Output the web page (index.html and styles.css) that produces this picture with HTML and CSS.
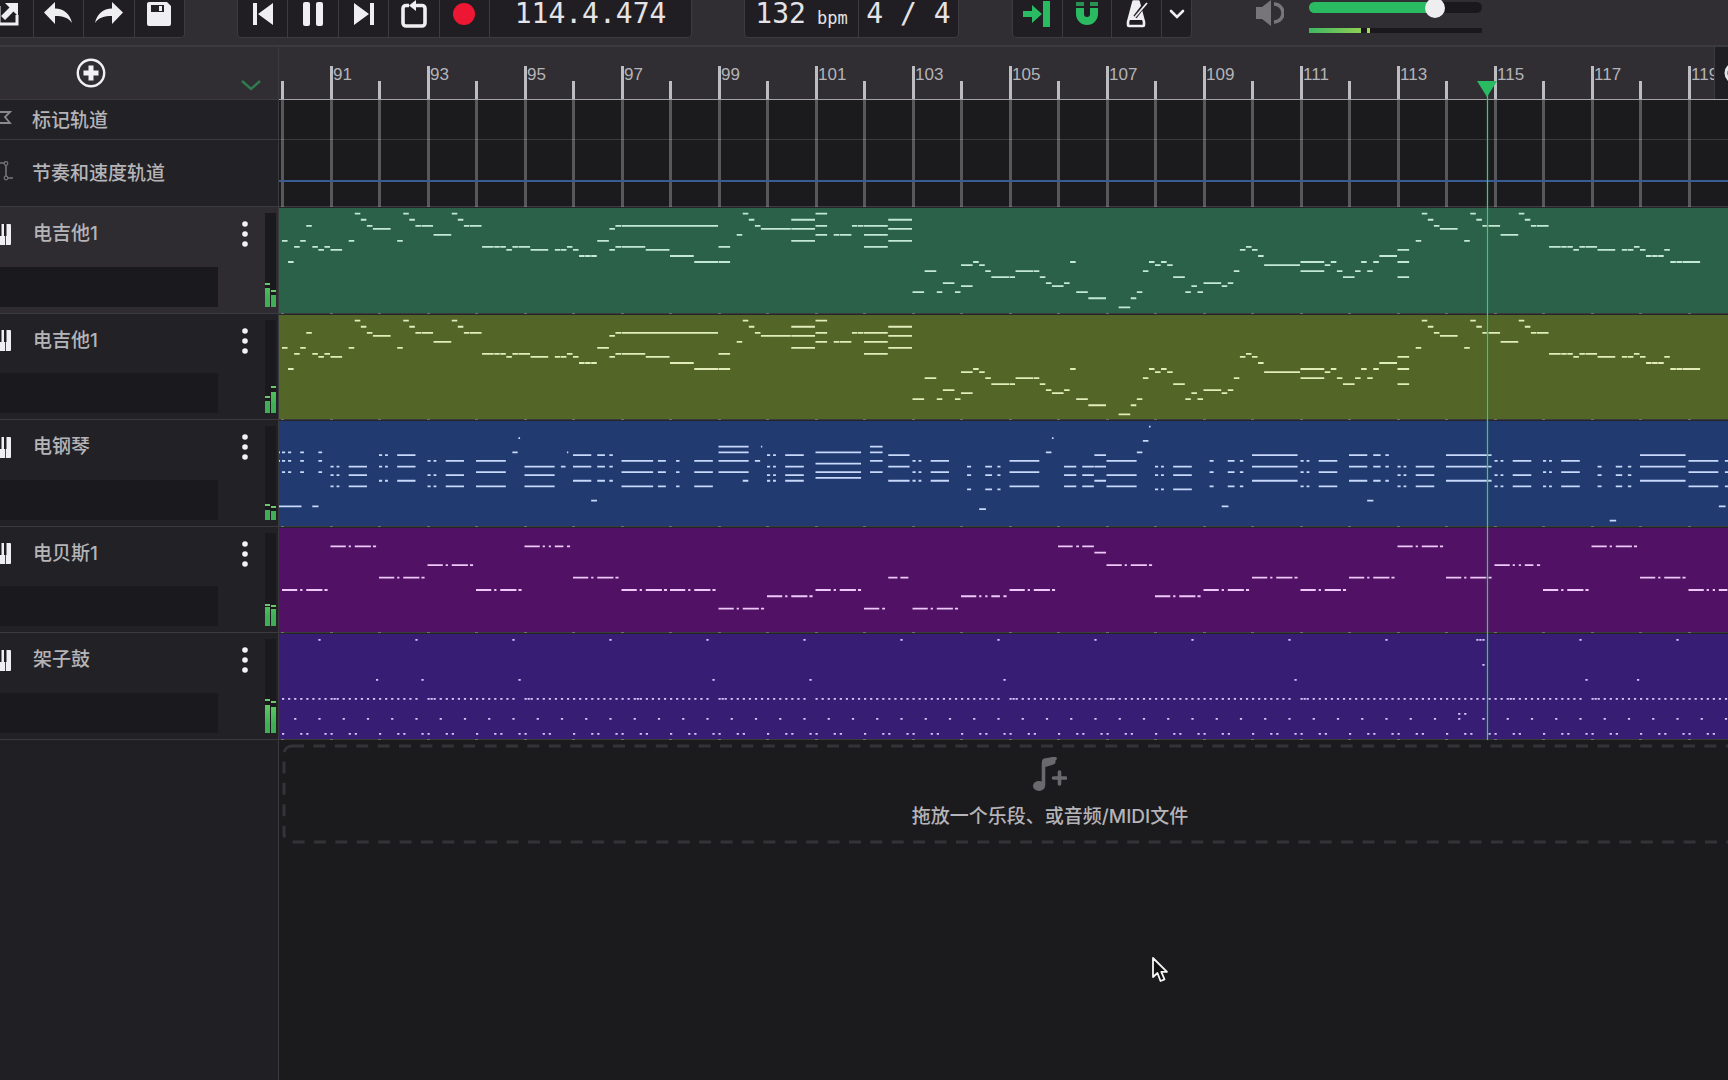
FILE: index.html
```html
<!DOCTYPE html>
<html lang="zh-CN">
<head>
<meta charset="utf-8">
<title>音轨编辑器</title>
<link rel="stylesheet" href="styles.css">
</head>
<body>
<header class="toolbar">
  <div class="group group-file">
    <button class="tool" aria-label="导出"><svg width="24" height="26" viewBox="0 0 24 26"><path d="M3 5v18h18v-9" fill="none" stroke="currentColor" stroke-width="3"/><path d="M9 2h13v13l-4.500-4.500L9 19l-4-4 8.500-8.500z" fill="currentColor"/></svg></button>
    <button class="tool" aria-label="撤销"><svg width="28" height="24" viewBox="0 0 28 24"><path d="M0 10.500 11 0v6.500c9 0 15 5.500 17 14.500-4-5.500-9-7-17-7V22z" fill="currentColor"/></svg></button>
    <button class="tool" aria-label="重做"><svg width="28" height="24" viewBox="0 0 28 24"><path d="M28 10.500 17 0v6.500C8 6.500 2 12 0 21c4-5.500 9-7 17-7V22z" fill="currentColor"/></svg></button>
    <button class="tool" aria-label="保存"><svg width="24" height="24" viewBox="0 0 24 24"><path d="M2 0h18l4 4v18a2 2 0 0 1-2 2H2a2 2 0 0 1-2-2V2a2 2 0 0 1 2-2z" fill="currentColor"/><path d="M4 3h13v7H4z" fill="#232126"/><path d="M12 4h3v5h-3z" fill="currentColor"/></svg></button>
  </div>
  <div class="group group-transport">
    <button class="tool" aria-label="回到开头"><svg width="22" height="22" viewBox="0 0 22 22"><path d="M1 0h4v22H1zM21 0v22L6 11z" fill="currentColor"/></svg></button>
    <button class="tool" aria-label="暂停"><svg width="22" height="24" viewBox="0 0 22 24"><rect x="1" width="7" height="24" rx="2" fill="currentColor"/><rect x="14" width="7" height="24" rx="2" fill="currentColor"/></svg></button>
    <button class="tool" aria-label="跳到结尾"><svg width="22" height="22" viewBox="0 0 22 22"><path d="M17 0h4v22h-4zM1 0v22l15-11z" fill="currentColor"/></svg></button>
    <button class="tool" aria-label="循环"><svg width="26" height="28" viewBox="0 0 26 28"><path d="M8 5.500H5a3 3 0 0 0-3 3V23a3 3 0 0 0 3 3h16a3 3 0 0 0 3-3V8.500a3 3 0 0 0-3-3h-6" fill="none" stroke="currentColor" stroke-width="3.600"/><path d="M8 5.500 15 0v11z" fill="currentColor"/></svg></button>
    <button class="tool" aria-label="录音"><svg width="24" height="24" viewBox="0 0 24 24"><circle cx="12" cy="12" r="11" fill="#ee1733"/></svg></button>
    <output class="readout readout-position">114.4.474</output>
  </div>
  <div class="group group-tempo">
    <output class="readout readout-tempo">132<span class="unit">bpm</span></output>
    <output class="readout readout-meter">4 / 4</output>
  </div>
  <div class="group group-modes">
    <button class="tool tool-on" aria-label="跟随播放"><svg width="28" height="26" viewBox="0 0 28 26"><path d="M0 10h9V4l10 9-10 9v-6H0zM20 0h7v26h-7z" fill="currentColor"/></svg></button>
    <button class="tool tool-on" aria-label="吸附"><svg width="24" height="26" viewBox="0 0 24 26"><path d="M1 7v6a11 11 0 0 0 22 0V7h-8v6a3 3 0 0 1-6 0V7z" fill="currentColor"/><path d="M1 1h8v4H1zM15 1h8v4h-8z" fill="currentColor" opacity=".75"/></svg></button>
    <button class="tool" aria-label="节拍器"><svg width="24" height="28" viewBox="0 0 24 28"><path d="M8.500 1.500h5L19 22v3q0 1-1 1H4q-1 0-1-1v-3z" fill="none" stroke="currentColor" stroke-width="2.600" stroke-linejoin="round"/><path d="M8 2h6l4 18H4z" fill="currentColor"/><path d="M10 17 20 4" stroke="#1f1d21" stroke-width="4"/><path d="m10 17 12-14" stroke="currentColor" stroke-width="1.800"/></svg></button>
    <button class="tool tool-narrow" aria-label="节拍器选项"><svg width="16" height="10" viewBox="0 0 16 10"><path d="m2 2 6 6 6-6" fill="none" stroke="currentColor" stroke-width="2.600" stroke-linecap="round"/></svg></button>
  </div>
  <div class="volume">
    <svg width="28" height="26" viewBox="0 0 28 26"><path d="M0 7h6l9-7v26l-9-7H0z" fill="#77757a"/><path d="M18 4a9 9 0 0 1 0 18" fill="none" stroke="#77757a" stroke-width="3.500"/></svg>
    <div class="volume-bars">
      <input class="volume-slider" type="range" min="0" max="100" value="76" aria-label="主音量">
      <div class="master-meter"><span class="master-level"></span><span class="master-peak"></span></div>
    </div>
  </div>
</header>

<main class="workspace">
  <aside class="panel">
    <div class="panel-head">
      <button class="icon-button" aria-label="添加音轨"><svg width="30" height="30" viewBox="0 0 30 30"><circle cx="15" cy="15" r="13.200" fill="none" stroke="#f1f0f3" stroke-width="2.400"/><path d="M12.500 7.500h5v5h5v5h-5v5h-5v-5h-5v-5h5z" fill="#f1f0f3"/></svg></button>
      <button class="icon-button collapse" aria-label="折叠"><svg width="20" height="11" viewBox="0 0 20 11"><path d="m1 1 9 8 9-8" fill="none" stroke="#2f7d4f" stroke-width="2.400"/></svg></button>
    </div>
    <div class="global-row marker-row">
      <svg width="12" height="14" viewBox="0 0 12 14"><path d="M-4 1h14L5 6l5 6H-4" fill="none" stroke="#8b898e" stroke-width="1.800"/></svg>
      <span>标记轨道</span>
    </div>
    <div class="global-row tempo-row">
      <svg width="14" height="20" viewBox="0 0 14 20"><path d="M0 2h4M6 4v11M8 17h5" fill="none" stroke="#77757a" stroke-width="1.600"/><circle cx="6" cy="2.500" r="1.800" fill="none" stroke="#77757a" stroke-width="1.200"/><circle cx="6" cy="17" r="1.800" fill="none" stroke="#77757a" stroke-width="1.200"/></svg>
      <span>节奏和速度轨道</span>
    </div>
    <div class="track-list">
      <div class="track track-selected">
        <div class="track-main">
          <div class="track-title"><svg class="piano"><use href="#piano"/></svg><span class="track-name">电吉他1</span><button class="icon-button more" aria-label="更多"><svg width="8" height="28"><use href="#dots"/></svg></button></div>
          <div class="track-slot"></div>
        </div>
        <div class="meter"><i style="--level:19px;--peak:22px"></i><i style="--level:12px;--peak:15px"></i></div>
      </div>
      <div class="track">
        <div class="track-main">
          <div class="track-title"><svg class="piano"><use href="#piano"/></svg><span class="track-name">电吉他1</span><button class="icon-button more" aria-label="更多"><svg width="8" height="28"><use href="#dots"/></svg></button></div>
          <div class="track-slot"></div>
        </div>
        <div class="meter"><i style="--level:12px;--peak:15px"></i><i style="--level:21px;--peak:25px"></i></div>
      </div>
      <div class="track">
        <div class="track-main">
          <div class="track-title"><svg class="piano"><use href="#piano"/></svg><span class="track-name">电钢琴</span><button class="icon-button more" aria-label="更多"><svg width="8" height="28"><use href="#dots"/></svg></button></div>
          <div class="track-slot"></div>
        </div>
        <div class="meter"><i style="--level:10px;--peak:14px"></i><i style="--level:9px;--peak:12px"></i></div>
      </div>
      <div class="track">
        <div class="track-main">
          <div class="track-title"><svg class="piano"><use href="#piano"/></svg><span class="track-name">电贝斯1</span><button class="icon-button more" aria-label="更多"><svg width="8" height="28"><use href="#dots"/></svg></button></div>
          <div class="track-slot"></div>
        </div>
        <div class="meter"><i style="--level:19px;--peak:20px"></i><i style="--level:17px;--peak:19px"></i></div>
      </div>
      <div class="track">
        <div class="track-main">
          <div class="track-title"><svg class="piano"><use href="#piano"/></svg><span class="track-name">架子鼓</span><button class="icon-button more" aria-label="更多"><svg width="8" height="28"><use href="#dots"/></svg></button></div>
          <div class="track-slot"></div>
        </div>
        <div class="meter"><i style="--level:28px;--peak:32px"></i><i style="--level:26px;--peak:30px"></i></div>
      </div>
    </div>
  </aside>

  <section class="timeline">
    <div class="ruler">
      <ol class="bars">
        <li>91</li><li>93</li><li>95</li><li>97</li><li>99</li><li>101</li><li>103</li><li>105</li><li>107</li><li>109</li><li>111</li><li>113</li><li>115</li><li>117</li><li>119</li>
      </ol>
      <button class="side-tab" aria-label="侧栏"><svg width="13" height="30" viewBox="0 0 13 30"><circle cx="20" cy="14" r="9" fill="none" stroke="#e6e5e8" stroke-width="3"/></svg></button>
    </div>
    <div class="lane marker-row"></div>
    <div class="lane tempo-row"><div class="tempo-line"></div></div>
    <div class="track-list">
      <div class="lane"><svg class="clip clip-green" data-notes="guitar"></svg></div>
      <div class="lane"><svg class="clip clip-olive" data-notes="guitar"></svg></div>
      <div class="lane"><svg class="clip clip-blue" data-notes="piano"></svg></div>
      <div class="lane"><svg class="clip clip-purple" data-notes="bass"></svg></div>
      <div class="lane"><svg class="clip clip-indigo" data-notes="drums"></svg></div>
    </div>
    <div class="dropzone">
      <svg class="dropzone-frame"><rect x="2" y="2" rx="8"/></svg>
      <svg width="34" height="34" viewBox="0 0 34 34"><path d="M10.500 28V6q0-1.500 1.500-2l10-2.500" fill="none" stroke="#6a696d" stroke-width="3.600" stroke-linecap="round"/><path d="M9 4q0-2 2-2.500L20 0q2.500 0 2.500 2v3q0 2-2 2.500L12.500 10z" fill="#6a696d"/><ellipse cx="6" cy="29" rx="6" ry="5" fill="#6a696d"/><path d="M26.500 15v12M20.500 21h12" stroke="#6a696d" stroke-width="3.600" stroke-linecap="round"/></svg>
      <p>拖放一个乐段、或音频/MIDI文件</p>
    </div>
    <div class="playhead"></div>
  </section>
</main>

<svg class="pointer" width="18" height="28" viewBox="0 0 18 28"><path d="M2 2v19l4.500-4 3 8 4-1.700-3.200-7.500H16z" fill="#111" stroke="#f5f5f5" stroke-width="1.800" stroke-linejoin="round"/></svg>

<svg class="symbols" aria-hidden="true">
  <symbol id="piano" viewBox="0 0 11 21"><path d="M0 0h10q1 0 1 1v19q0 1-1 1H0z" fill="#efeef1"/><path d="M0 0h1.500v12H0zM4 0h2.500v12H4zM5 12h.800v9H5z" fill="#1f1d21"/></symbol>
  <symbol id="dots" viewBox="0 0 8 28"><g fill="#f3f2f5"><circle cx="4" cy="4" r="2.800"/><circle cx="4" cy="14" r="2.800"/><circle cx="4" cy="24" r="2.800"/></g></symbol>
</svg>
<script src="app.js"></script>
</body>
</html>
```
FILE: styles.css
```css
:root {
  --line: #3b3a3e;
  --dark: #1b1a1d;
  --panel: #222125;
  --raised: #302e33;
  --green: #2abb62;
  --bar-pair: 97px;
}

* { box-sizing: border-box; }

body {
  margin: 0;
  min-height: 100vh;
  display: flex;
  flex-direction: column;
  overflow: hidden;
  background: var(--dark);
  color: #b5b4b8;
  font: 500 19px/24px Inter, "Noto Sans CJK SC", sans-serif;
}

svg { display: block; }

button {
  padding: 0;
  border: 0;
  background: none;
  color: #efeef1;
}

/* Toolbar */
.toolbar {
  display: flex;
  align-items: flex-end;
  height: 47px;
  padding-bottom: 7px;
  background: var(--raised);
  border-bottom: 2px solid var(--line);
}

.group {
  display: flex;
  flex: none;
  height: 48px;
  overflow: hidden;
  background: #201e22;
  border: 1px solid #3d3b40;
  border-radius: 4px;
}

.group-file { width: 203px; margin-left: -18px; }
.group-transport { width: 455px; margin-left: 52px; }
.group-tempo { width: 215px; margin-left: 52px; }
.group-modes { width: 180px; margin-left: 53px; }

.tool {
  display: grid;
  flex: 1;
  place-items: center;
}

.tool + .tool, .tool + .readout, .readout + .readout { border-left: 1px solid #3d3b40; }
.tool-on { color: var(--green); }
.tool-narrow { flex: none; width: 30px; }

.readout {
  display: flex;
  justify-content: center;
  align-items: center;
  gap: 11px;
  color: #e4e3e7;
  font: 28px/26px "DejaVu Sans Mono", monospace;
}

.readout-position { width: 202px; }
.readout-tempo { width: 113px; }
.readout-meter { flex: 1; }
.unit { font-size: 17px; line-height: 18px; padding-top: 8px; }

.volume {
  display: flex;
  align-items: flex-end;
  gap: 25px;
  padding-bottom: 5px;
  margin-left: 64px;
}

.volume > svg { margin-bottom: 7px; }

.volume-bars {
  display: flex;
  flex-direction: column;
  gap: 15px;
  width: 173px;
}

.volume-slider {
  appearance: none;
  width: 100%;
  height: 11px;
  margin: 0;
  border-radius: 6px;
  background: linear-gradient(90deg, var(--green) 73%, #1a181c 73%);
}

.volume-slider::-webkit-slider-thumb {
  appearance: none;
  width: 20px;
  height: 20px;
  border-radius: 50%;
  background: #eeedef;
}

.master-meter {
  display: flex;
  gap: 6px;
  height: 5px;
  background: #1a181c;
}

.master-level { width: 30%; background: linear-gradient(90deg, #3fb763, #8fcf54); }
.master-peak { width: 3px; background: #a4dd50; }

/* Workspace */
.workspace { display: flex; flex: 1; }

.panel {
  flex: none;
  width: 279px;
  background: #201f23;
  border-right: 1px solid var(--line);
}

.panel-head {
  display: flex;
  justify-content: space-between;
  align-items: center;
  height: 53px;
  padding: 0 17px 0 76px;
  background: var(--raised);
  border-bottom: 1px solid var(--line);
}

.icon-button { display: grid; place-items: center; }
.collapse { padding-top: 24px; }

.marker-row { height: 40px; }
.tempo-row { height: 67px; }

.global-row {
  display: grid;
  grid-template-columns: 32px 1fr;
  align-items: center;
  padding-top: 2px;
  background: var(--panel);
  border-bottom: 1px solid var(--line);
}

.global-row svg { margin-top: -6px; }

.track-list {
  display: grid;
  grid-template-rows: repeat(5, 1fr);
  height: 533px;
}

.track {
  display: flex;
  justify-content: space-between;
  min-height: 0;
  padding: 6px 2px 6px 0;
  background: var(--panel);
  border-bottom: 1px solid var(--line);
}

.track-selected { background: #2e2c31; }

.track-main {
  display: flex;
  flex: 1;
  flex-direction: column;
  justify-content: space-between;
}

.track-title {
  display: flex;
  align-items: center;
  height: 42px;
  padding-right: 16px;
}

.piano { width: 11px; height: 21px; margin-right: 22px; }
.track-name { flex: 1; }

.track-slot {
  width: 218px;
  height: 40px;
  background: #1a191d;
}

.meter {
  display: flex;
  gap: 1px;
  width: 11px;
  background: #1a191d;
}

.meter i {
  position: relative;
  align-self: flex-end;
  width: 5px;
  height: var(--level);
  background: linear-gradient(0deg, #3fae57 0 9px, #66cf63 32px);
}

.meter i::after {
  content: "";
  position: absolute;
  bottom: var(--peak);
  width: 5px;
  height: 2px;
  background: #6fc66c;
}

/* Timeline */
.timeline {
  position: relative;
  flex: 1;
  min-width: 0;
  overflow: hidden;
}

.ruler {
  display: flex;
  position: relative;
  height: 53px;
  padding: 19px 0 0 51px;
  overflow: hidden;
  background: linear-gradient(90deg, #bdbcc1 3px, transparent 3px) 2px 100% / var(--bar-pair) 18px repeat-x, var(--raised);
  border-bottom: 1px solid #a3a2a7;
}

.bars {
  display: flex;
  margin: 0;
  padding: 0;
  list-style: none;
}

.bars li {
  flex: none;
  width: var(--bar-pair);
  border-left: 3px solid #bdbcc1;
  font: 17px/18px "Liberation Sans", sans-serif;
}

.side-tab {
  position: absolute;
  top: 0;
  right: 0;
  width: 14px;
  height: 53px;
  background: #1f1e22;
  border-left: 1px solid var(--line);
}

.lane {
  min-height: 0;
  background:
    linear-gradient(90deg, #58575a 3px, transparent 3px) 51px 0 / var(--bar-pair) 100%,
    linear-gradient(90deg, #58575a 3px, transparent 3px) 2px 0 / var(--bar-pair) 100%,
    var(--dark);
  border-bottom: 1px solid rgba(255, 255, 255, 0.14);
}

.tempo-line {
  height: 42px;
  border-bottom: 2px solid #3a5c94;
}

.clip {
  width: 100%;
  height: 100%;
  border-top: 1px solid #252428;
}

.clip-green { background: #2a6148; fill: #c3e9d4; }
.clip-olive { background: #536527; fill: #e3edba; }
.clip-blue { background: #213a70; fill: #c8d9fb; }
.clip-purple { background: #511265; fill: #efc8fa; }
.clip-indigo { background: #371d73; fill: #d8c6fd; }

.playhead {
  position: absolute;
  top: 34px;
  left: 1208px;
  width: 1px;
  height: 659px;
  background: #3fc77a;
  box-shadow: 0 0 2px #2a8f56;
}

.playhead::before {
  content: "";
  position: absolute;
  left: -10px;
  border: solid transparent;
  border-width: 16px 10px 0;
  border-top-color: var(--green);
}

.dropzone {
  position: relative;
  display: flex;
  flex-direction: column;
  align-items: center;
  gap: 14px;
  height: 100px;
  margin: 4px -90px 0 3px;
  padding-top: 13px;
}

.dropzone p { margin: 0; }

.dropzone-frame {
  position: absolute;
  inset: 0;
  width: 100%;
  height: 100%;
}

.dropzone-frame rect {
  width: calc(100% - 4px);
  height: calc(100% - 4px);
  fill: none;
  stroke: #343337;
  stroke-width: 3px;
  stroke-dasharray: 12 9.4;
}

.pointer { position: absolute; left: 1151px; top: 956px; }
.symbols { position: absolute; width: 0; height: 0; }
```
FILE: app.js
```js
// Positions and lengths are in sixteenth notes counted from bar 90.
const STEP = 97 / 32;
const ORIGIN = 3;

const guitar = [
  [0,2,9],[2,2,16],[4,2,11],[6,2,9],[8,2,4],[10,2,11],[12,2,12],[14,2,11],[16,4,12],[22,2,9],[24,2,0],[26,2,2],[28,2,4],[30,6,5],
  [38,2,9],[40,2,0],[42,2,2],[44,2,4],[46,4,4],[50,6,7],[56,2,0],[58,2,2],[60,2,4],[62,4,4],[66,4,11],[70,2,11],[72,2,11],[74,2,12],
  [76,2,11],[78,4,11],[82,6,12],[90,2,12],[92,2,12],[94,2,11],[96,2,12],[98,2,14],[100,2,14],[102,2,14],[104,4,9],[108,2,5,12],
  [110,2,4,11],[112,32,4],[112,8,11],[120,8,12],[128,8,14],[136,8,16],[144,4,11,16],[150,2,7],[152,2,0],[154,2,2],[156,2,4],[158,10,5],
  [168,8,2,5,9],[176,4,0,4,7],[182,2,7],[184,4,7],[188,2,4],[190,2,4],[192,8,4,7,11],[200,8,2,5,9],
  [208,4,26],[212,4,19],[216,2,26],[218,4,23],[222,2,26],[224,4,17,24],[228,2,16],[230,2,17],[232,2,19],[234,6,21],[240,2,21],
  [242,6,19],[248,2,19],[250,2,21],[252,2,23],[254,4,24],[258,2,23],[260,2,16],[262,4,26],[266,6,28],[276,4,31],[280,2,28],[282,2,26],
  [284,2,19],[286,2,16],[288,2,17],[290,2,16],[292,2,17],[294,4,21],[298,2,26],[300,2,24],[302,2,26],[304,6,23],[310,2,24],[312,2,23],
  [314,2,19],[316,2,12],[318,2,11],[320,2,12],[322,2,14],[324,12,17],[336,8,16,19],[344,2,17],[346,2,16],[348,2,19],[350,4,21],
  [354,2,19],[356,2,16],[358,2,19],[360,2,16],[362,6,14],[368,4,12,16,21],[374,2,9],[376,2,0],[378,2,2],[380,2,4],[382,6,5],
  [390,2,9],[392,2,0],[394,2,2],[396,2,4],[398,4,4],[402,6,7],[408,2,0],[410,2,2],[412,2,4],[414,4,4],[418,4,11],[422,2,11],
  [424,2,11],[426,2,12],[428,2,11],[430,4,11],[434,6,12],[442,2,12],[444,2,12],[446,2,11],[448,2,12],[450,2,14],[452,2,14],
  [454,2,14],[456,2,12],[458,2,16],[460,2,16],[462,6,16]
];

const piano = [
  [-1,0.5,9,12],[0,1.2,9,12,16],[2,1.2,9,12,16],[6,1.4,9,12,16],[12,1.4,9,12,16],[-1,7.6,28],[10,2.2,28],
  [16,1.2,14,17,21],[18,1.1,14,17,21],[22,6.2,14,17,21],[32,1.2,10,14,19],[34,1.1,10,14,19],[38,6.2,10,14,19],
  [48,1.2,12,17,21],[50,1.1,12,17,21],[54,6.2,12,17,21],[64,10,12,16,21],[76,1.9,9],[78,0.7,4],[80,10.1,14,17,21],
  [92,1.7,14],[94,0.6,9],[96,6.2,10,14,19],[104,2.7,10,14,19],[108,1.3,10,14,19],[102,2.1,26],
  [112,10.6,12,16,21],[124,2.8,12,16,21],[130,1.3,12,16,21],[136,6.3,12,16,21],[144,10.1,7,9,12,16],[152,2,19],[156,1.9,12],[158,0.6,7],
  [160,1.2,10,14,17,19],[162,1.1,10,14,17,19],[166,6.3,10,14,17,19],[176,15.2,9,13,16,18],[194,4.3,7,9,12,16],[200,7.2,10,14,19],
  [208,1.2,12,16,19],[210,1.1,12,16,19],[214,6.2,12,16,19],[226,1.5,14,17,22],[232,2.4,14,17,22],[236,1.2,14,17,22],[230,2.4,29],
  [240,10,12,16,21],[252,2,9],[254,0.7,4],[258,4.2,14,17,21],[264,4,14,17,21],[268,4,10,14,19],[272,10.1,12,17,21],
  [282,2,9],[284,2,5],[286,0.7,0],[288,1.2,14,17,22],[290,1.1,14,17,22],[294,6.3,14,17,22],
  [306,1.5,12,16,21],[312,2.4,12,16,21],[316,1.3,12,16,21],[310,2.4,28],[320,15.2,10,14,19],
  [336,1.2,12,16,21],[338,1.1,12,16,21],[342,6.3,12,16,21],[352,6.2,10,14,19],[360,2.6,10,14,19],[364,1.3,10,14,19],[358,2.2,26],
  [368,1.2,14,17,21],[370,1.1,14,17,21],[374,6.3,14,17,21],[384,15.2,10,14,19],[400,1.2,12,17,21],[402,1.1,12,17,21],[406,6.3,12,17,21],
  [416,1.2,12,16,21],[418,1.1,12,16,21],[422,6.3,12,16,21],[434,1.5,14,17,21],[440,2.3,14,17,21],[444,1.3,14,17,21],[438,2.3,33],
  [448,15.2,10,14,19],[464,10,12,16,21],[476,3,12,16,21],[474,2.4,28]
];

const steady = [[0,5.2],[6,0.9],[8,5.5],[14,1.2]];
const broken = [[0,5.2],[6,0.9],[8,0.9],[10,3],[14,1.2]];
const bassBars = [7,0,5,3,7,[0],5,7,7,10,8,7,null,10,[8],7,null,3,8,7,5,7,5,0,5,[3],7,0,5,[7]];
const bass = [[192,5.2,10],[198,1.1,10],[200,3.2,5],[204,2.8,5],[256,5,0],[262,1.1,0],[264,4,0],[268,4,1]];
bassBars.forEach((row, bar) => {
  if (row === null) return;
  const pattern = Array.isArray(row) ? broken : steady;
  pattern.forEach(([start, length]) => bass.push([bar * 16 + start, length, Number(row)]));
});

// Drum rows are pixel heights inside the clip.
const drums = [];
const hit = (row, steps) => steps.forEach(step => drums.push([step, 0.9, row]));
hit(6, [12,44,76,108,140,172,204,236,268,300,332,364,394,395,396,428,460]);
hit(31, [396]);
hit(46, [31,46,78,142,174,238,334,430,447]);
hit(80, [388,390]);
hit(65, [17,49,81,117,145,241,273,337,405,433]);
const rests = [46,78,142,174,238,334,430];
for (let step = 0; step < 520; step += 2) {
  if (!rests.includes(step)) hit(65, [step]);
  if (step % 8 === 4) hit(85, [step]);
  if ([0,6,8,14,16,22,24].includes(step % 32)) hit(100, [step]);
}

const parts = {
  guitar: { notes: guitar, top: 4.8, row: 3.02 },
  piano: { notes: piano, top: 4.8, row: 2.845 },
  bass: { notes: bass, top: 17.5, row: 6.23 },
  drums: { notes: drums, top: -1, row: 1 }
};

document.querySelectorAll("[data-notes]").forEach(clip => {
  const { notes, top, row } = parts[clip.dataset.notes];
  let d = "";
  notes.forEach(([start, length, ...rows]) => rows.forEach(r => {
    const width = length * STEP - 0.5;
    d += `M${(ORIGIN + start * STEP).toFixed(2)} ${(top + r * row).toFixed(2)}h${width.toFixed(2)}v1.8h${(-width).toFixed(2)}z`;
  }));
  const path = document.createElementNS("http://www.w3.org/2000/svg", "path");
  path.setAttribute("d", d);
  clip.append(path);
});
```
